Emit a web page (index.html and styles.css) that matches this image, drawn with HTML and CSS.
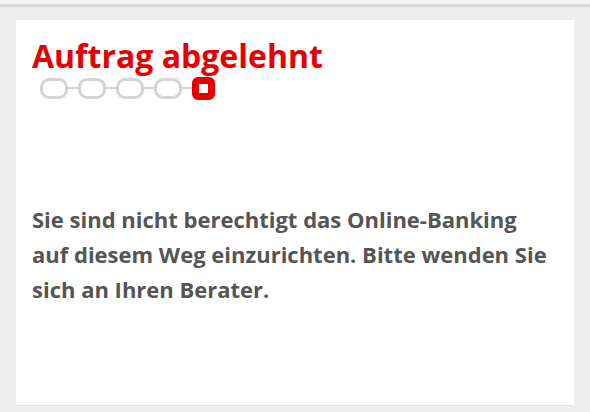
FILE: index.html
```html
<!DOCTYPE html>
<html lang="de">
<head>
    <meta charset="UTF-8">
    <meta name="viewport" content="width=device-width, initial-scale=1.0">
    <title>Auftrag abgelehnt</title>
    <link rel="stylesheet" href="styles.css">
</head>
<body>
    <div class="topbar"></div>
    <div class="card">
        <h1 class="title">Auftrag abgelehnt</h1>
        <div class="steps">
            <span class="step"></span>
            <span class="link"></span>
            <span class="step"></span>
            <span class="link"></span>
            <span class="step"></span>
            <span class="link"></span>
            <span class="step"></span>
            <span class="link"></span>
            <span class="step active"></span>
        </div>
        <p class="message">
            Sie sind nicht berechtigt das Online-Banking<br>
            auf diesem Weg einzurichten. Bitte wenden Sie<br>
            sich an Ihren Berater.
        </p>
    </div>
</body>
</html>
```

FILE: styles.css
```css
* {
    margin: 0;
    padding: 0;
    box-sizing: border-box;
}
body {
    background: #eeeeee;
    font-family: 'Open Sans', sans-serif;
    height: 412px;
    overflow: hidden;
}
.topbar {
    height: 7px;
    background: #f3f3f3;
    border-bottom: 3px solid #d8d8d8;
}
.card {
    background: #fff;
    margin: 13px 16px 0;
    height: 385px;
    padding: 18px 16px 0;
    box-shadow: 0 1px 1px rgba(0,0,0,0.04);
}
.title {
    color: #e60000;
    font-size: 32px;
    font-weight: 700;
    line-height: 36px;
}
.steps {
    display: flex;
    align-items: center;
    padding-left: 8px;
    margin-top: 3px;
    height: 22px;
}
.step {
    flex: none;
    width: 28px;
    height: 21px;
    border: 3px solid #d4d4d4;
    border-radius: 9px;
}
.link {
    flex: none;
    width: 10px;
    height: 2px;
    background: #d4d4d4;
}
.step.active {
    width: 23px;
    height: 23px;
    border: 7px solid #e60000;
    border-radius: 6px;
    background: #fff;
}
.message {
    color: #555;
    font-size: 22px;
    font-weight: 700;
    line-height: 35px;
    margin-top: 103px;
}
```
